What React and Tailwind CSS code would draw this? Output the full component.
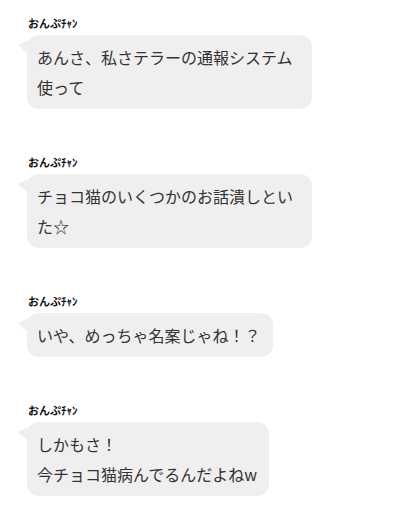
import React from "react";

const messages = [
  { name: "おんぷﾁｬﾝ", lines: ["あんさ、私さテラーの通報システム使って"] },
  { name: "おんぷﾁｬﾝ", lines: ["チョコ猫のいくつかのお話潰しといた☆"] },
  { name: "おんぷﾁｬﾝ", lines: ["いや、めっちゃ名案じゃね！？"] },
  { name: "おんぷﾁｬﾝ", lines: ["しかもさ！", "今チョコ猫病んでるんだよねw"] },
];

const Bubble = ({ name, lines }) => (
  <div className="flex flex-col items-start">
    <div className="ml-[28px] text-[11px] leading-[15px] font-bold text-[#111]">
      {name}
    </div>
    <div className="relative ml-[27px] mt-[4px] max-w-[285px] rounded-[12px] bg-[#efefef] pl-[10px] pr-[12px] py-[7px] text-[16px] leading-[30px] text-[#333]">
      <svg
        className="absolute left-[-9px] top-[5px]"
        width="10"
        height="14"
        viewBox="0 0 10 14"
      >
        <polygon points="0,5 10,0 10,14" fill="#efefef" />
      </svg>
      {lines.map((l, i) => (
        <div key={i}>{l}</div>
      ))}
    </div>
  </div>
);

export default function App() {
  return (
    <div
      className="w-[402px] h-[512px] bg-white pt-[16px] flex flex-col gap-[46px] overflow-hidden"
      style={{ fontFamily: '"Noto Sans CJK JP", "Noto Sans", sans-serif' }}
    >
      {messages.map((m, i) => (
        <Bubble key={i} {...m} />
      ))}
    </div>
  );
}
